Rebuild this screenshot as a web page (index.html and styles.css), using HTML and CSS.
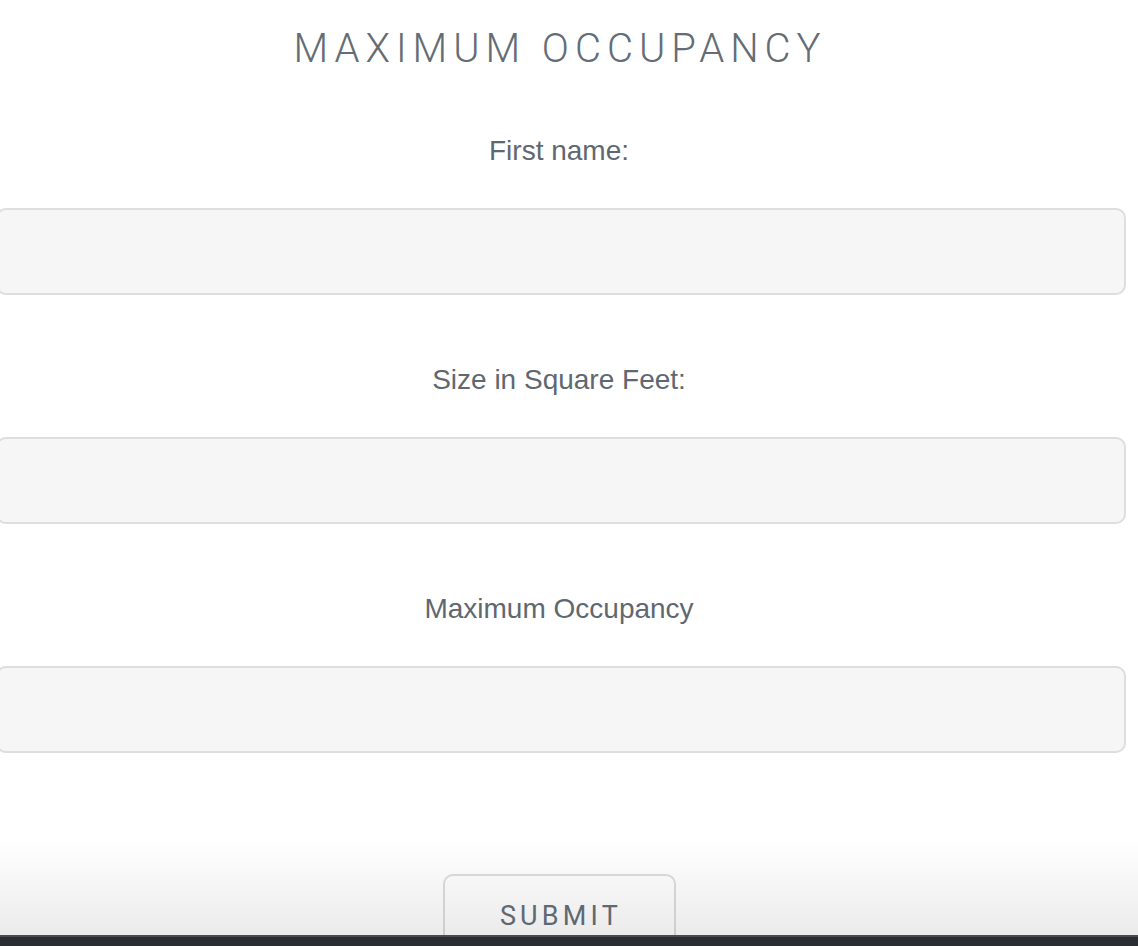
FILE: index.html
```html
<!DOCTYPE html>
<html>
  <head>
    <link rel="stylesheet" href="styles.css">
  </head>
  <body>
    <div class="page">
      <h1 class="title">Maximum Occupancy</h1>

      <form class="occupancy-form">
        <div class="field">
          <label for="firstName">First name:</label>
          <input type="text" id="firstName">
        </div>
        <div class="field">
          <label for="size">Size in Square Feet:</label>
          <input type="text" id="size">
        </div>
        <div class="field">
          <label for="occupancy">Maximum Occupancy</label>
          <input type="text" id="occupancy">
        </div>
        <div class="actions">
          <button type="button" class="submit">Submit</button>
        </div>
      </form>
    </div>

    <div class="fade"></div>
    <div class="bottom-bar"></div>
  </body>
</html>
```

FILE: styles.css
```css
body {
  margin: 0;
  background: #fff;
  font-family: "Liberation Sans", Arial, sans-serif;
  color: #5f6770;
}
.page {
  width: 1130px;
  margin-left: -4px;
  padding-top: 26px;
}
.title {
  margin: 0 0 63px;
  padding-right: 2px;
  font-family: Roboto, "Liberation Sans", sans-serif;
  font-weight: 300;
  font-size: 40px;
  line-height: 46px;
  letter-spacing: 6px;
  text-transform: uppercase;
  text-align: center;
  color: #646c75;
}
.field {
  margin-bottom: 69px;
}
.field label {
  display: block;
  padding-right: 4px;
  font-size: 28px;
  line-height: 32px;
  text-align: center;
  margin-bottom: 41px;
}
.field input {
  display: block;
  box-sizing: border-box;
  width: 100%;
  height: 87px;
  border: 2px solid #dedede;
  border-radius: 10px;
  background: #f6f6f6;
  outline: none;
}
.actions {
  display: flex;
  justify-content: center;
  padding-top: 52px;
  padding-right: 4px;
}
.submit {
  box-sizing: border-box;
  width: 233px;
  height: 84px;
  border: 2px solid #dedede;
  border-radius: 10px;
  background: #fff;
  font-family: Roboto, "Liberation Sans", sans-serif;
  font-weight: 400;
  font-size: 27px;
  letter-spacing: 4.2px;
  text-transform: uppercase;
  color: #66707a;
  padding: 0 0 0 4px;
}
.fade {
  position: fixed;
  left: 0;
  right: 0;
  bottom: 11px;
  height: 95px;
  background: linear-gradient(to bottom, rgba(0, 0, 0, 0), rgba(0, 0, 0, 0.08));
  pointer-events: none;
}
.bottom-bar {
  position: fixed;
  left: 0;
  right: 0;
  bottom: 0;
  height: 9px;
  border-top: 2px solid #4a4b4d;
  background: #2a2d31;
}
```
